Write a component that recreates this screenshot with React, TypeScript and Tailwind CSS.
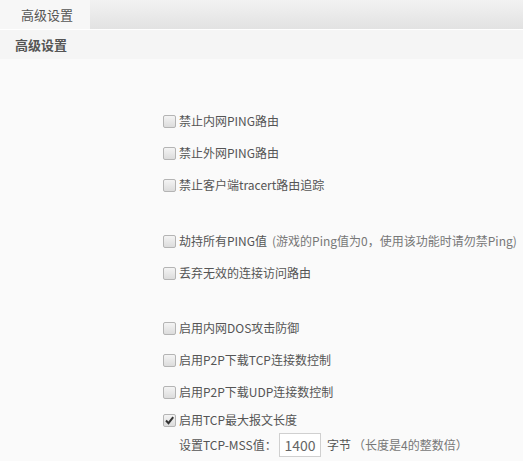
import React from "react";

const font = { fontFamily: '"Noto Sans CJK SC", "Noto Sans", sans-serif' };

function Box({ checked }: { checked?: boolean }) {
  return (
    <span className="relative inline-flex h-[13px] w-[13px] shrink-0 items-center justify-center rounded-[2px] border border-[#b4b4b4] bg-gradient-to-b from-[#f4f4f4] to-[#dcdcdc]">
      {checked && (
        <svg width="11" height="11" viewBox="0 0 11 11" className="absolute">
          <path d="M2 5.5 L4.5 8.2 L9.2 2.2" fill="none" stroke="#333" strokeWidth="2" />
        </svg>
      )}
    </span>
  );
}

function Row({ label, extra, checked }: { label: string; extra?: string; checked?: boolean }) {
  return (
    <div className="flex h-[32px] items-center gap-[3px] whitespace-nowrap">
      <Box checked={checked} />
      <span className="shrink-0 text-[12px] text-[#555]">{label}</span>
      {extra && <span className="ml-[2px] shrink-0 text-[12px] text-[#777]">{extra}</span>}
    </div>
  );
}

export default function App() {
  return (
    <div className="h-[461px] w-[523px] overflow-hidden bg-[#fafafa]" style={font}>
      <div className="flex h-[29px] bg-gradient-to-b from-[#f2f2f2] to-[#e2e2e2]">
        <div className="flex w-[90px] items-center justify-center pl-[4px] bg-[#f7f7f7] text-[13px] text-[#555]">
          高级设置
        </div>
      </div>
      <div className="h-px bg-white" />
      <div className="flex h-[29px] items-center bg-[#f5f5f5] pl-[15px] text-[13px] font-bold text-[#555]">
        高级设置
      </div>
      <div className="flex flex-col pl-[163px] pt-[46px]">
        <Row label="禁止内网PING路由" />
        <Row label="禁止外网PING路由" />
        <Row label="禁止客户端tracert路由追踪" />
        <div className="h-[24px]" />
        <Row label="劫持所有PING值" extra="(游戏的Ping值为0，使用该功能时请勿禁Ping)" />
        <Row label="丢弃无效的连接访问路由" />
        <div className="h-[23px]" />
        <Row label="启用内网DOS攻击防御" />
        <Row label="启用P2P下载TCP连接数控制" />
        <Row label="启用P2P下载UDP连接数控制" />
        <div className="flex h-[24px] items-center gap-[3px] whitespace-nowrap">
          <Box checked />
          <span className="text-[12px] text-[#555]">启用TCP最大报文长度</span>
        </div>
        <div className="flex h-[26px] items-center whitespace-nowrap pl-[16px] text-[12px] text-[#555]">
          <span className="w-[100px]">设置TCP-MSS值：</span>
          <span className="flex h-[24px] w-[42px] items-center justify-center border border-[#d0d0d0] bg-white text-[14px] text-[#666]">
            1400
          </span>
          <span className="ml-[6px]">字节</span>
          <span className="ml-[2px] text-[#777]">（长度是4的整数倍）</span>
        </div>
      </div>
    </div>
  );
}
